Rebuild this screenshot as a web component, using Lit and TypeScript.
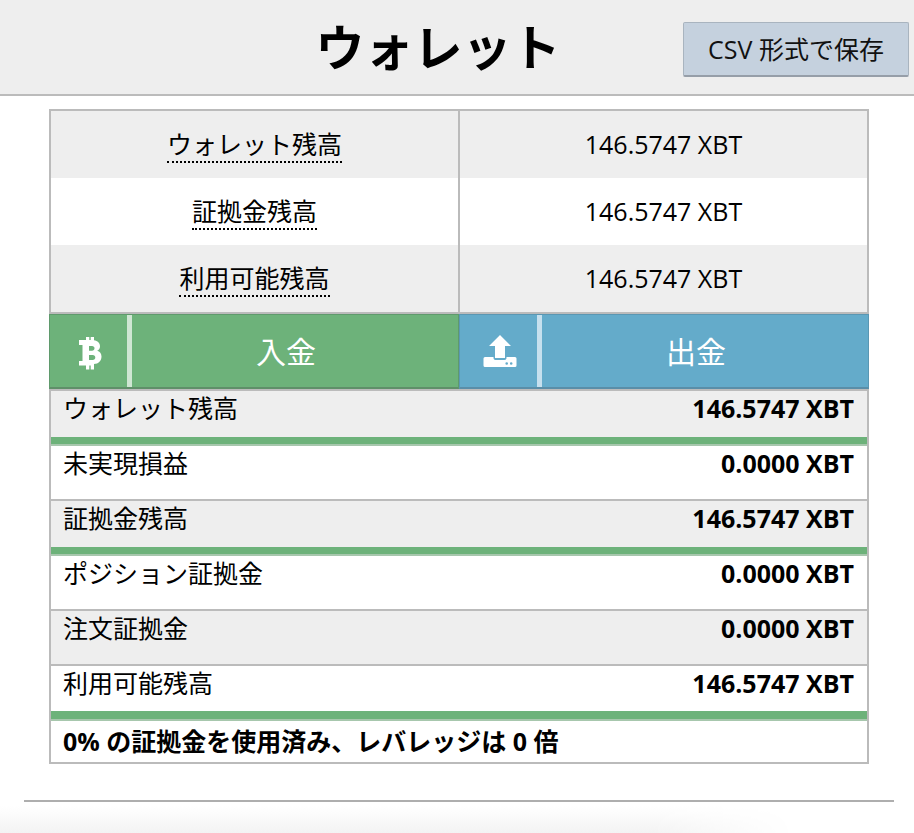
import { LitElement, html, css } from "lit";
import { customElement } from "lit/decorators.js";

const top = ["ウォレット残高", "証拠金残高", "利用可能残高"];
const rows: { l: string; v: string; alt: boolean; g: number }[] = [
  { l: "ウォレット残高", v: "146.5747 XBT", alt: true, g: 7 },
  { l: "未実現損益", v: "0.0000 XBT", alt: false, g: 0 },
  { l: "証拠金残高", v: "146.5747 XBT", alt: true, g: 7 },
  { l: "ポジション証拠金", v: "0.0000 XBT", alt: false, g: 0 },
  { l: "注文証拠金", v: "0.0000 XBT", alt: true, g: 0 },
  { l: "利用可能残高", v: "146.5747 XBT", alt: false, g: 8 },
];

@customElement("app-root")
export class AppRoot extends LitElement {
  static styles = css`
    :host {
      display: block;
      width: 914px;
      height: 833px;
      overflow: hidden;
      position: relative;
      background: #fff;
      color: #000;
      font-family: "Open Sans", "Noto Sans CJK JP", sans-serif;
    }
    .head {
      height: 94px;
      background: #eeeeee;
      border-bottom: 2px solid #bbbbbb;
      position: relative;
      display: flex;
      align-items: center;
      justify-content: center;
      padding-right: 38px;
    }
    h1 {
      margin: 0;
      font-size: 49px;
      font-weight: 700;
      line-height: 94px;
    }
    .csv {
      position: absolute;
      left: 683px;
      top: 22px;
      width: 226px;
      height: 55px;
      box-sizing: border-box;
      background: #c5d1de;
      border: 1px solid #a9b4bf;
      border-bottom: 2px solid #969ea8;
      border-radius: 2px;
      font: inherit;
      font-size: 25px;
      color: #111;
      padding: 0 0 2px;
    }
    .card {
      margin: 13px 0 0 49px;
      width: 820px;
      height: 655px;
      box-sizing: border-box;
      border: 2px solid #bbbbbb;
    }
    .t-row {
      display: grid;
      grid-template-columns: 407px 2px 1fr;
      height: 67px;
      align-items: stretch;
      font-size: 25px;
    }
    .t-row.alt { background: #eeeeee; }
    .t-row > div {
      display: flex;
      align-items: center;
      justify-content: center;
    }
    .t-row > .sep { background: #bbbbbb; }
    .t-row span.u {
      border-bottom: 2px dotted #000;
      line-height: 30px;
      padding-bottom: 2px;
      margin-top: 2px;
    }
    .t-row .val { padding-bottom: 1px; }
    .btns {
      display: grid;
      grid-template-columns: 410px 410px;
      height: 77px;
      margin: 0 -2px;
      border-top: 2px solid #bbbbbb;
      box-sizing: border-box;
    }
    .btn {
      display: grid;
      grid-template-columns: 77px 5px 1fr;
      color: #fff;
      font-size: 30px;
      box-sizing: border-box;
      border: 1px solid #5f9a6c;
      border-bottom: 2px solid #5f8f69;
      background: #6db27a;
    }
    .btn.blue {
      background: #64abca;
      border-color: #5a97b3;
      border-bottom-color: #5a8ea8;
    }
    .btn > div {
      display: flex;
      align-items: center;
      justify-content: center;
    }
    .btn .ico { padding: 4px 0 0 2px; }
    .btn.blue .ico { padding-top: 0; }
    .btn .lbl { padding-right: 18px; padding-bottom: 2px; }
    .btn .bar { background: #cfe6d3; }
    .btn.blue .bar { background: #c6e0ee; }
    .btn svg { display: block; }
    .summary { border-top: 2px solid #bbbbbb; }
    .s-row {
      height: 55px;
      display: flex;
      flex-direction: column;
      box-sizing: border-box;
      font-size: 25px;
      line-height: 34px;
      border-bottom: 2px solid #bbbbbb;
    }
    .s-row.alt { background: #eeeeee; }
    .s-row.green { border-bottom-color: #a7c7ad; }
    .cells {
      flex: 1;
      display: flex;
      justify-content: space-between;
      padding: 0 13px 0 12px;
    }
    .cells b { font-weight: 700; }
    .g { background: #6db27a; }
    .foot {
      padding-left: 12px;
      font-size: 25px;
      font-weight: 700;
      line-height: 41px;
    }
    .hr {
      position: absolute;
      left: 24px;
      top: 800px;
      width: 870px;
      height: 2px;
      background: #aeaeae;
    }
    .shade {
      position: absolute;
      left: 0;
      right: 120px;
      top: 806px;
      height: 27px;
      background: linear-gradient(#ffffff, #f3f3f3);
      -webkit-mask-image: linear-gradient(to right, #000 82%, transparent);
      mask-image: linear-gradient(to right, #000 82%, transparent);
    }
  `;

  render() {
    return html`
      <div class="head">
        <h1>ウォレット</h1>
        <button class="csv">CSV 形式で保存</button>
      </div>
      <div class="card">
        ${top.map(
          (t, i) => html`
            <div class="t-row ${i % 2 === 0 ? "alt" : ""}">
              <div><span class="u">${t}</span></div>
              <div class="sep"></div>
              <div class="val">146.5747 XBT</div>
            </div>
          `
        )}
        <div class="btns">
          <div class="btn">
            <div class="ico">
              <svg width="24" height="33" viewBox="0 0 24 33" fill="#fff">
                <path fill-rule="evenodd" d="M8 0h3.300v3h1.400V0H16v3.300c3.600.6 6 2.600 6 6 0 2.200-1 3.700-2.800 4.500 2.700.7 4.300 2.800 4.300 5.700 0 4.300-3 7.300-7.500 7.600V32.500h-3.300V28.500h-1.400v4H8v-4H1V24h3.500V8H1V3h7V0zm3 9v4.700h3c1.500 0 2.500-.9 2.500-2.350S15.500 9 14 9h-3zm0 9v5h3.700c1.600 0 2.600-1 2.600-2.500S16.300 18 14.700 18H11z"/>
              </svg>
            </div>
            <div class="bar"></div>
            <div class="lbl">入金</div>
          </div>
          <div class="btn blue">
            <div class="ico">
              <svg width="34" height="32" viewBox="0 0 34 32" fill="#fff">
                <path d="M17 0l11 11h-6v12H12V11H6z"/>
                <path fill-rule="evenodd" d="M2 22h8.500v1c0 1.200.8 2 2 2h9c1.200 0 2-.8 2-2v-1H32a1.500 1.500 0 0 1 1.500 1.500v7A1.500 1.500 0 0 1 32 32H2a1.500 1.500 0 0 1-1.500-1.500v-7A1.500 1.500 0 0 1 2 22zm23 6.500a1.300 1.300 0 1 0-2.600 0 1.300 1.300 0 0 0 2.600 0zm4.500 0a1.300 1.300 0 1 0-2.600 0 1.300 1.300 0 0 0 2.600 0z"/>
              </svg>
            </div>
            <div class="bar"></div>
            <div class="lbl">出金</div>
          </div>
        </div>
        <div class="summary">
          ${rows.map(
            (r) => html`
              <div class="s-row ${r.alt ? "alt" : ""} ${r.g ? "green" : ""}">
                <div class="cells"><span>${r.l}</span><b>${r.v}</b></div>
                ${r.g ? html`<div class="g" style="height:${r.g}px"></div>` : ""}
              </div>
            `
          )}
          <div class="foot">0% の証拠金を使用済み、レバレッジは 0 倍</div>
        </div>
      </div>
      <div class="hr"></div>
      <div class="shade"></div>
    `;
  }
}
